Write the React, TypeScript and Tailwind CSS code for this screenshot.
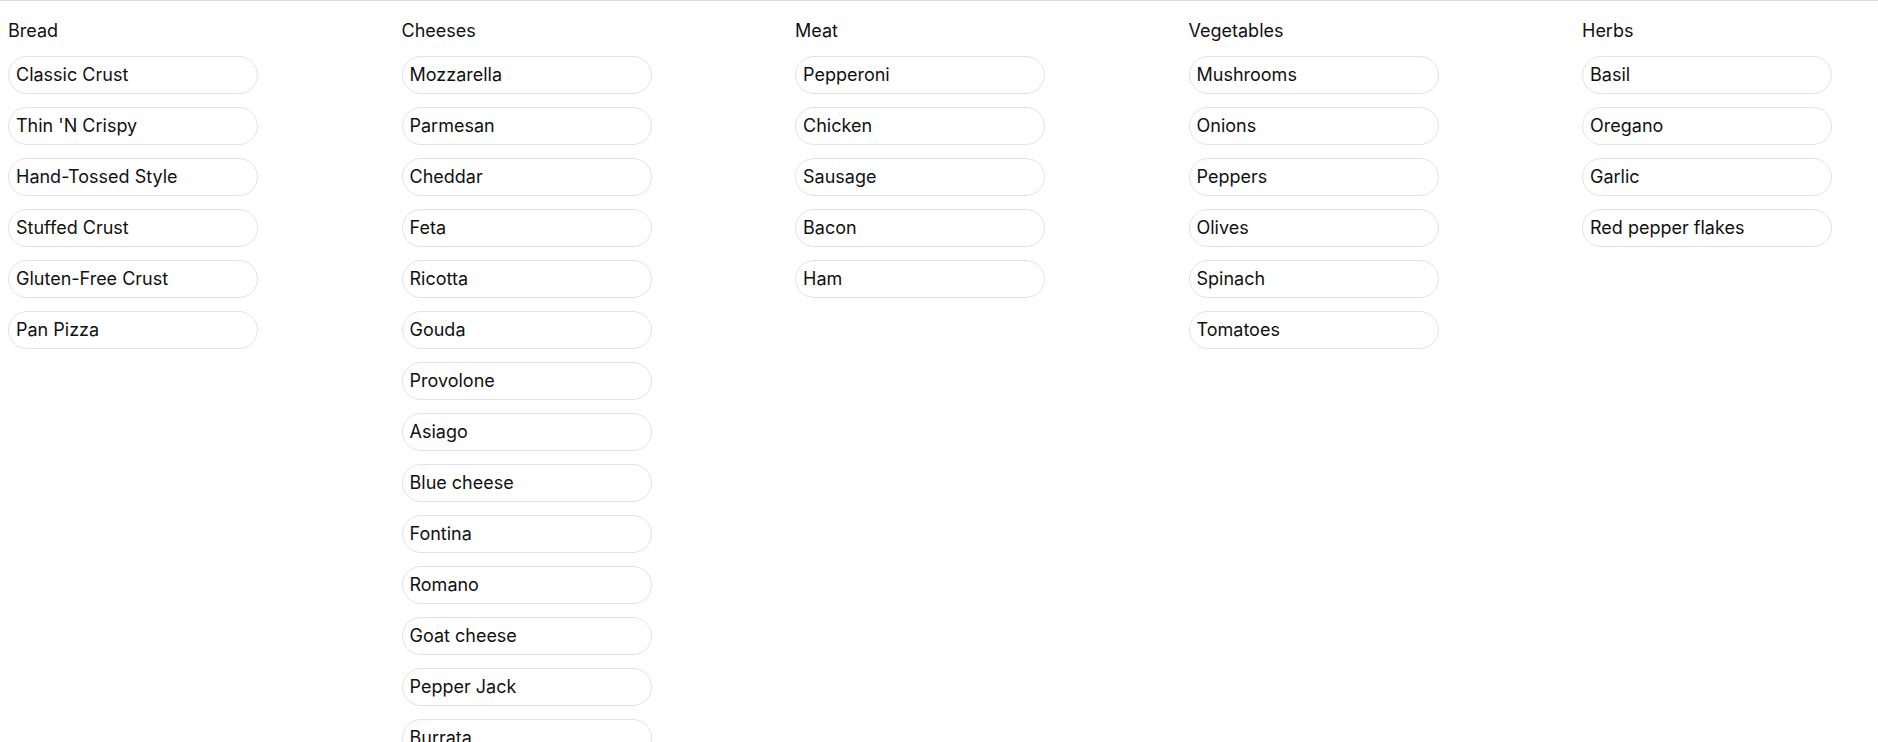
import React from "react";

const groups: { title: string; items: string[] }[] = [
  { title: "Bread", items: ["Classic Crust", "Thin 'N Crispy", "Hand-Tossed Style", "Stuffed Crust", "Gluten-Free Crust", "Pan Pizza"] },
  { title: "Cheeses", items: ["Mozzarella", "Parmesan", "Cheddar", "Feta", "Ricotta", "Gouda", "Provolone", "Asiago", "Blue cheese", "Fontina", "Romano", "Goat cheese", "Pepper Jack", "Burrata"] },
  { title: "Meat", items: ["Pepperoni", "Chicken", "Sausage", "Bacon", "Ham"] },
  { title: "Vegetables", items: ["Mushrooms", "Onions", "Peppers", "Olives", "Spinach", "Tomatoes"] },
  { title: "Herbs", items: ["Basil", "Oregano", "Garlic", "Red pepper flakes"] },
];

export default function App() {
  return (
    <div className="min-h-screen bg-white border-t border-[#dcdcdc] text-[#111] font-['Inter','Noto_Sans',sans-serif]">
      <div className="grid grid-cols-[repeat(4,393.5px)_1fr] pl-2 pt-4">
        {groups.map((g) => (
          <div key={g.title} className="flex flex-col">
            <div className="text-[18px] leading-[28px] h-[28px]">{g.title}</div>
            <div className="mt-[11px] flex flex-col gap-[13px]">
              {g.items.map((it) => (
                <div
                  key={it}
                  className="w-[250px] h-[38px] rounded-full border-[1.5px] border-[#e3e3e3] px-[7px] flex items-center text-[18px] leading-[28px]"
                >
                  {it}
                </div>
              ))}
            </div>
          </div>
        ))}
      </div>
    </div>
  );
}
